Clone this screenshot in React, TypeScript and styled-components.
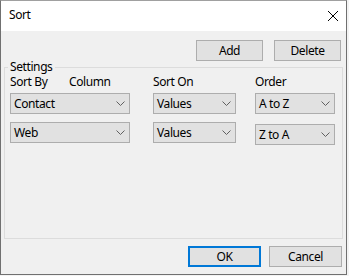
import React from 'react';
import styled, { createGlobalStyle } from 'styled-components';

const GlobalStyle = createGlobalStyle`
  html, body {
    margin: 0;
    padding: 0;
    background: #f3f3f3;
  }
  body {
    font-family: "Noto Sans", "Open Sans", sans-serif;
    font-size: 12px;
    letter-spacing: -0.4px;
    color: #000;
  }
`;

const Window = styled.div`
  width: 347px;
  height: 275px;
  box-sizing: border-box;
  border: 1px solid #707070;
  border-top-color: #a0a0a0;
  background: #f0f0f0;
  display: flex;
  flex-direction: column;
`;

const TitleBar = styled.div`
  height: 30px;
  flex: none;
  background: #fff;
  display: flex;
  align-items: center;
  justify-content: space-between;
  padding: 0 8px 2px 8px;
  box-sizing: border-box;
  line-height: 16px;
`;

const CloseButton = styled.div`
  width: 10px;
  height: 10px;
  display: flex;
  margin-top: 1px;
`;

const Body = styled.div`
  flex: 1;
  display: flex;
  flex-direction: column;
  padding: 9px 0 0 3px;
`;

const ButtonRow = styled.div<{ $right: number; $gap: number }>`
  display: flex;
  justify-content: flex-end;
  gap: ${(p) => p.$gap}px;
  padding-right: ${(p) => p.$right}px;
`;

const Button = styled.div<{ $width: number; $default?: boolean }>`
  width: ${(p) => p.$width}px;
  height: 21px;
  box-sizing: border-box;
  background: #e1e1e1;
  border: ${(p) => (p.$default ? '2px solid #0078d7' : '1px solid #adadad')};
  display: flex;
  align-items: center;
  justify-content: center;
  line-height: 16px;
`;

const GroupBox = styled.fieldset`
  margin: -1px 3px 0 0;
  padding: 0 0 0 5px;
  height: 179px;
  box-sizing: border-box;
  border: 1px solid #dcdcdc;
  min-width: 0;
`;

const Legend = styled.legend`
  padding: 0 3px 0 2px;
  margin-left: -2px;
  line-height: 14px;
`;

const SortGrid = styled.div`
  display: grid;
  grid-template-columns: 143px 102px 1fr;
  line-height: 16px;
`;

const HeaderCell = styled.div<{ $split?: boolean }>`
  display: grid;
  grid-template-columns: ${(p) => (p.$split ? '59px 1fr' : '1fr')};
  height: 16px;
  margin-bottom: 3px;
`;

const Dropdown = styled.div<{ $width: number; $shift?: number }>`
  width: ${(p) => p.$width}px;
  height: 21px;
  box-sizing: border-box;
  border: 1px solid #adadad;
  background: #e1e1e1;
  display: flex;
  align-items: center;
  justify-content: space-between;
  padding: 0 4px 0 3px;
  margin-top: ${(p) => p.$shift ?? 0}px;
  margin-bottom: 8px;
`;

const Footer = styled.div`
  margin-top: 7px;
`;

const Chevron = () => (
  <svg width="9" height="5" viewBox="0 0 9 5">
    <path d="M0.5 0.5 L4.5 4.5 L8.5 0.5" fill="none" stroke="#606060" strokeWidth="1" />
  </svg>
);

const Select = ({ value, width, shift }: { value: string; width: number; shift?: number }) => (
  <Dropdown $width={width} $shift={shift}>
    <span>{value}</span>
    <Chevron />
  </Dropdown>
);

const rows = [
  { column: 'Contact', on: 'Values', order: 'A to Z', shift: 0 },
  { column: 'Web', on: 'Values', order: 'Z to A', shift: 2 },
];

const App = () => {
  return (
    <>
      <GlobalStyle />
      <Window>
        <TitleBar>
          <span>Sort</span>
          <CloseButton>
            <svg width="10" height="10" viewBox="0 0 10 10">
              <path d="M0 0 L10 10 M10 0 L0 10" stroke="#000" strokeWidth="1" />
            </svg>
          </CloseButton>
        </TitleBar>
        <Body>
          <ButtonRow $right={5} $gap={11}>
            <Button $width={67}>Add</Button>
            <Button $width={67}>Delete</Button>
          </ButtonRow>
          <GroupBox>
            <Legend>Settings</Legend>
            <SortGrid>
              <HeaderCell $split>
                <span>Sort By</span>
                <span>Column</span>
              </HeaderCell>
              <HeaderCell>Sort On</HeaderCell>
              <HeaderCell>Order</HeaderCell>
              {rows.map((r) => (
                <React.Fragment key={r.column}>
                  <Select value={r.column} width={120} />
                  <Select value={r.on} width={83} />
                  <Select value={r.order} width={80} shift={r.shift} />
                </React.Fragment>
              ))}
            </SortGrid>
          </GroupBox>
          <Footer>
            <ButtonRow $right={4} $gap={8}>
              <Button $width={73} $default>OK</Button>
              <Button $width={73}>Cancel</Button>
            </ButtonRow>
          </Footer>
        </Body>
      </Window>
    </>
  );
};

export default App;
